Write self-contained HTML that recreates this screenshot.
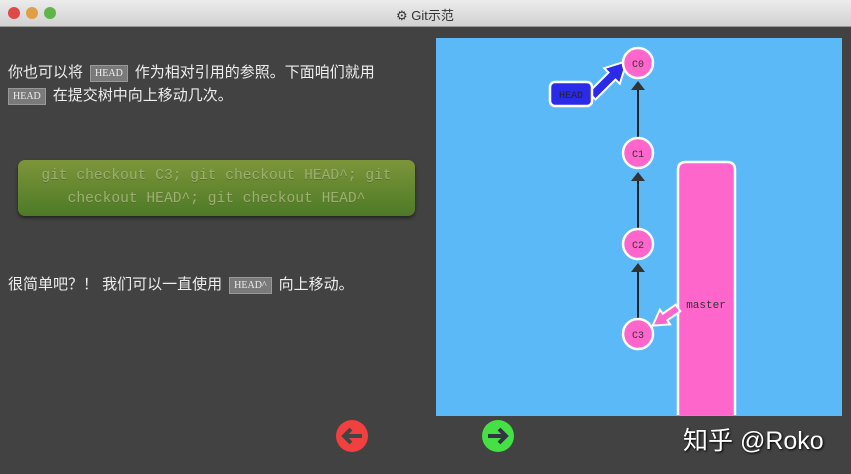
<!DOCTYPE html>
<html><head><meta charset="utf-8"><style>
body{margin:0;width:851px;height:474px;background:#424242;overflow:hidden;position:relative;font-family:"Liberation Sans","Noto Sans CJK SC",sans-serif;}
.tb{position:absolute;left:0;top:0;width:851px;height:26px;background:linear-gradient(#ececec,#d2d2d2);border-bottom:1px solid #9a9a9a;}
.dot{position:absolute;top:7px;width:12px;height:12px;border-radius:50%;}
.t{position:absolute;color:#eee;font-size:15px;white-space:nowrap}
.k{display:inline-block;background:#7a7a7a;color:#eee;font-family:"Liberation Serif",serif;font-size:10px;padding:2px 4px;border:1px solid #999;margin:0 7px;vertical-align:1px}
.g{position:absolute;left:18px;top:160px;width:397px;height:56px;border-radius:7px;background:linear-gradient(#7d953a,#4d7a27);box-shadow:0 2px 3px #222;color:#9cb070;font-family:"Liberation Mono",monospace;font-size:14.6px;text-align:center;line-height:23px;padding-top:5px;box-sizing:border-box;text-shadow:0 1px 0 #5a7030}
</style></head><body>
<div class="tb">
<div class="dot" style="left:8px;background:#e0494a"></div>
<div class="dot" style="left:26px;background:#dfa045"></div>
<div class="dot" style="left:44px;background:#5fb54a"></div>
<div style="position:absolute;left:396px;top:5px;font-size:13px;color:#333">⚙ Git示范</div>
</div>
<div class="t" style="left:8px;top:61px">你也可以将<span class="k">HEAD</span>作为相对引用的参照。下面咱们就用</div>
<div class="t" style="left:8px;top:84px"><span class="k" style="margin-left:0">HEAD</span>在提交树中向上移动几次。</div>
<div class="g">git checkout C3; git checkout HEAD^; git<br>checkout HEAD^; git checkout HEAD^</div>
<div class="t" style="left:8px;top:273px">很简单吧？！ 我们可以一直使用<span class="k">HEAD^</span>向上移动。</div>
<svg style="position:absolute;left:0;top:0" width="851" height="474">
<rect x="436" y="38" width="406" height="378" fill="#5cb9f7"/>
<g stroke="#222" stroke-width="2"><line x1="638" y1="88" x2="638" y2="137"/><line x1="638" y1="178" x2="638" y2="228"/><line x1="638" y1="270" x2="638" y2="319"/></g>
<g fill="#333"><path d="M631 90h14l-7-9z"/><path d="M631 181h14l-7-9z"/><path d="M631 272h14l-7-9z"/></g>
<path d="M678 415V170q0-8 8-8h41q8 0 8 8v245" fill="#ff66cc" stroke="#fff" stroke-width="2.5"/>
<text x="706" y="308" font-family="Liberation Mono,monospace" font-size="11" fill="#333" text-anchor="middle">master</text>
<path d="M680.3 311.3L667.3 320.3L670.1 324.4L652.7 325.6L659.9 309.6L662.7 313.7L675.7 304.7z" fill="#ff66cc" stroke="#fff" stroke-width="2"/>
<path d="M595.5 99.5L615.5 79.5L619.8 83.8L627 61L604.2 68.2L608.5 72.5L588.5 92.5z" fill="#2a2ae8" stroke="#fff" stroke-width="2"/>
<rect x="550" y="82" width="42" height="24" rx="5" fill="#2a2ae8" stroke="#fff" stroke-width="2.5"/>
<text x="571" y="98" font-family="Liberation Mono,monospace" font-size="10" fill="#223" text-anchor="middle">HEAD</text>
<g fill="#ff66cc" stroke="#fff" stroke-width="2.5"><circle cx="638" cy="63" r="15"/><circle cx="638" cy="153" r="15"/><circle cx="638" cy="244" r="15"/><circle cx="638" cy="334" r="15"/></g>
<g font-family="Liberation Mono,monospace" font-size="10" fill="#333" text-anchor="middle"><text x="638" y="67">C0</text><text x="638" y="157">C1</text><text x="638" y="248">C2</text><text x="638" y="338">C3</text></g>
<circle cx="352" cy="436" r="16" fill="#f04040"/><path d="M362 436h-17M351 429l-7 7 7 7" stroke="#444" stroke-width="4" fill="none"/>
<circle cx="498" cy="436" r="16" fill="#44e044"/><path d="M488 436h17M499 429l7 7-7 7" stroke="#334" stroke-width="4" fill="none"/>
</svg>
<div style="position:absolute;left:683px;top:421px;color:#fff;font-size:25px;text-shadow:1px 1px 2px #000">知乎 @Roko</div>
</body></html>
